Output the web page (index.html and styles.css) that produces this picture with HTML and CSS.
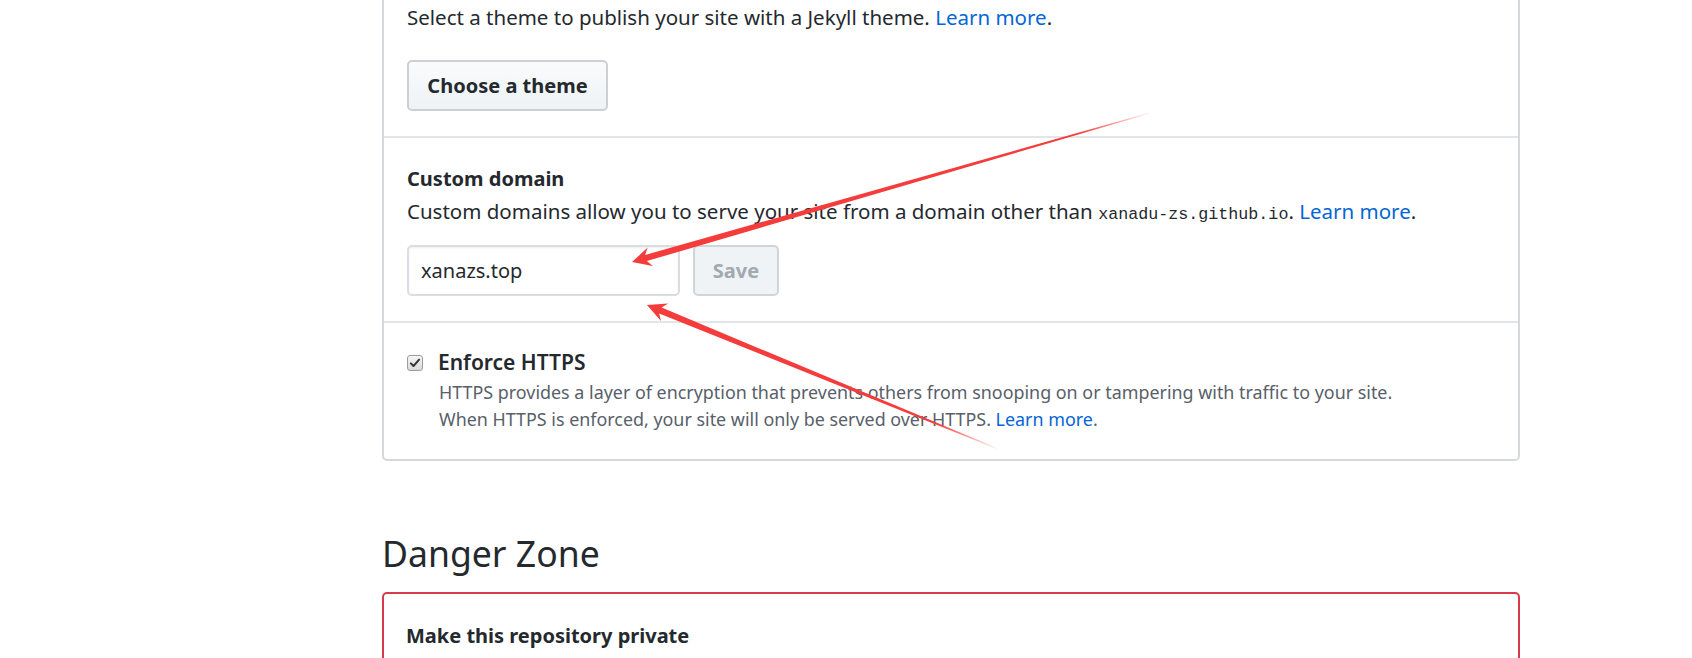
FILE: index.html
```html
<!DOCTYPE html>
<html>
<head>
<meta charset="utf-8">
<link rel="stylesheet" href="styles.css">
</head>
<body>
<div class="page">
  <div class="box">
    <div class="row row-first">
      <p class="text">Select a theme to publish your site with a Jekyll theme. <a class="link">Learn more</a>.</p>
      <button class="btn btn-theme">Choose a theme</button>
    </div>
    <div class="row row-domain">
      <h4 class="title">Custom domain</h4>
      <p class="text text-desc">Custom domains allow you to serve your site from a domain other than <code class="code">xanadu-zs.github.io</code>. <a class="link">Learn more</a>.</p>
      <div class="form">
        <input class="input" type="text" value="xanazs.top">
        <button class="btn btn-save">Save</button>
      </div>
    </div>
    <div class="row row-https">
      <div class="check-line">
        <span class="checkbox"><svg viewBox="0 0 16 16" width="12" height="12"><path d="M2.5 8.5 L6 12 L13.5 3.5" fill="none" stroke="#333" stroke-width="2.6" stroke-linecap="round" stroke-linejoin="round"/></svg></span>
        <span class="check-title">Enforce HTTPS</span>
      </div>
      <p class="note">HTTPS provides a layer of encryption that prevents others from snooping on or tampering with traffic to your site.<br>When HTTPS is enforced, your site will only be served over HTTPS. <a class="link">Learn more</a>.</p>
    </div>
  </div>

  <h2 class="danger-heading">Danger Zone</h2>
  <div class="danger-box">
    <div class="danger-row">
      <h4 class="title">Make this repository private</h4>
    </div>
  </div>

  <svg class="arrows" width="1692" height="658" viewBox="0 0 1692 658">
    <defs>
      <linearGradient id="g1" gradientUnits="userSpaceOnUse" x1="0" y1="0" x2="539" y2="0">
        <stop offset="0" stop-color="#f43c3c" stop-opacity="1"/>
        <stop offset="0.86" stop-color="#f43c3c" stop-opacity="1"/>
        <stop offset="1" stop-color="#f43c3c" stop-opacity="0.06"/>
      </linearGradient>
      <linearGradient id="g2" gradientUnits="userSpaceOnUse" x1="0" y1="0" x2="379" y2="0">
        <stop offset="0" stop-color="#f43c3c" stop-opacity="1"/>
        <stop offset="0.82" stop-color="#f43c3c" stop-opacity="1"/>
        <stop offset="1" stop-color="#f43c3c" stop-opacity="0.06"/>
      </linearGradient>
    </defs>
    <g transform="translate(632 262) rotate(-16.05)">
      <polygon fill="url(#g1)" points="0,0 19,-9.5 14.5,-3.2 539,-0.5 539,0.5 14.5,3.2 19,9.5"/>
    </g>
    <g transform="translate(647 305) rotate(22.3)">
      <polygon fill="url(#g2)" points="0,0 19,-9.5 14.5,-3.2 379,-0.5 379,0.5 14.5,3.2 19,9.5"/>
    </g>
  </svg>
</div>
</body>
</html>
```

FILE: styles.css
```css
html, body {
  margin: 0;
  padding: 0;
  background: #ffffff;
}

body {
  font-family: "Noto Sans", "Open Sans", sans-serif;
  color: #24292e;
  font-size: 20.5px;
  line-height: 30px;
  overflow: hidden;
  height: 658px;
}

.page {
  position: relative;
  display: flow-root;
  width: 1692px;
  height: 658px;
  padding-left: 382px;
  box-sizing: border-box;
}

.box {
  width: 1138px;
  box-sizing: border-box;
  margin-top: -28px;
  border: 2px solid #d5d8dc;
  border-radius: 5px;
}

.row {
  padding: 26px 23px 25px 23px;
  border-top: 2px solid #e3e6e9;
}

.row-first {
  border-top: none;
  padding-top: 28px;
}

.text {
  margin: 0;
}

.link {
  color: #0366d6;
  text-decoration: none;
}

.btn {
  font-family: "Noto Sans", "Open Sans", sans-serif;
  font-weight: 700;
  font-size: 20px;
  height: 51px;
  box-sizing: border-box;
  border: 2px solid #cdd0d3;
  border-radius: 5px;
  background: linear-gradient(180deg, #fafbfc 0%, #eff3f6 90%);
  color: #24292e;
  padding: 0 18px;
  display: block;
}

.btn-theme {
  margin-top: 28px;
  width: 201px;
}

.title {
  margin: 0 0 2px 0;
  font-size: 20px;
  font-weight: 700;
  line-height: 30px;
}

.code {
  font-family: "Liberation Mono", "DejaVu Sans Mono", monospace;
  font-size: 16.7px;
}

.form {
  display: flex;
  gap: 13px;
  margin-top: 15px;
}

.input {
  width: 273px;
  height: 51px;
  box-sizing: border-box;
  border: 2px solid #dadde1;
  border-radius: 5px;
  padding: 0 12px;
  font-family: "Noto Sans", "Open Sans", sans-serif;
  font-size: 20px;
  color: #24292e;
  box-shadow: inset 0 1px 2px rgba(27, 31, 35, 0.075);
  outline: none;
}

.btn-save {
  width: 86px;
  padding: 0;
  color: #a2a9b0;
  background: #eff3f6;
  border-color: #d2d5d8;
}

.row-https {
  padding-top: 24px;
  padding-bottom: 26px;
}

.check-line {
  display: flex;
  align-items: center;
  gap: 15px;
}

.checkbox {
  width: 16px;
  height: 16px;
  box-sizing: border-box;
  border: 1px solid #9c9c9c;
  border-radius: 3px;
  background: linear-gradient(180deg, #f5f5f5, #d9d9d9);
  display: flex;
  align-items: center;
  justify-content: center;
  margin-top: 1px;
}

.check-title {
  font-weight: 600;
  font-size: 21px;
}

.note {
  margin: 2px 0 0 32px;
  font-size: 17.9px;
  line-height: 27px;
  color: #586069;
}

.danger-heading {
  margin: 70px 0 16px 0;
  font-size: 35.6px;
  font-weight: 400;
  line-height: 45px;
}

.danger-box {
  width: 1138px;
  box-sizing: border-box;
  border: 2px solid #d73a49;
  border-radius: 5px;
  height: 200px;
}

.danger-row {
  padding: 27px 22px;
}

.arrows {
  position: absolute;
  left: 0;
  top: 0;
  pointer-events: none;
}
```
